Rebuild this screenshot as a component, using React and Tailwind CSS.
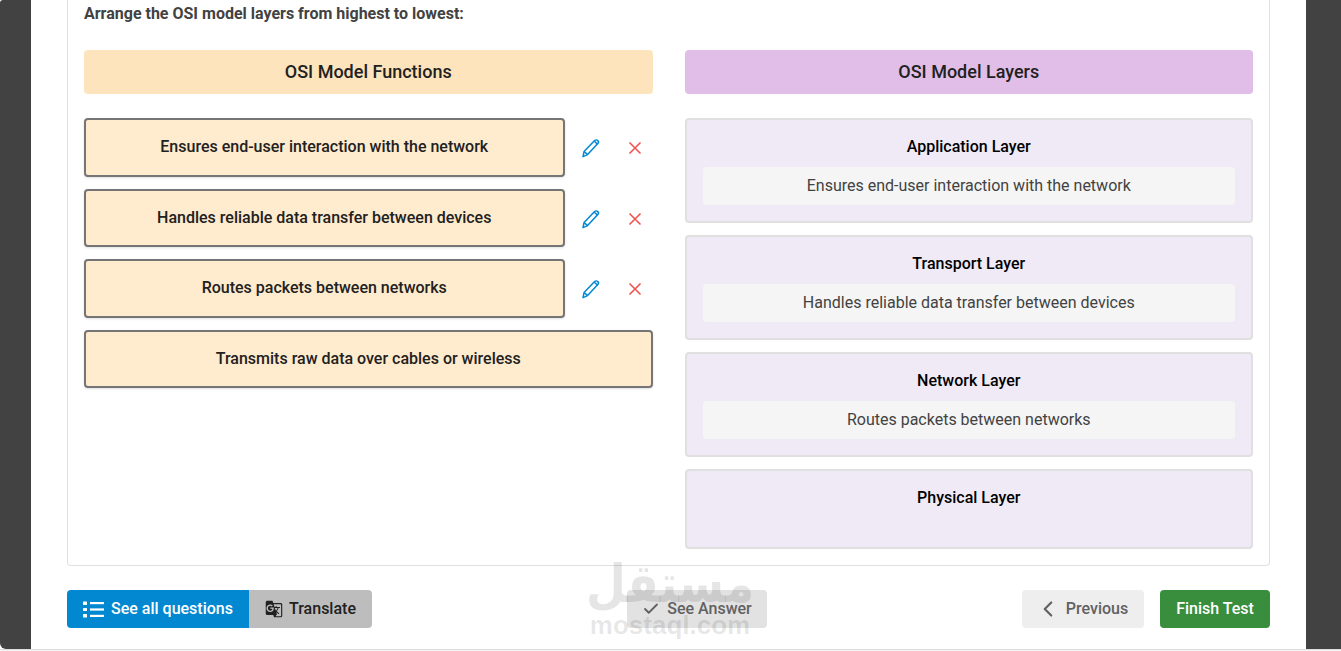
import React from "react";
import { Check, ChevronLeft } from "lucide-react";
import { MdGTranslate } from "react-icons/md";

const functions = [
  { text: "Ensures end-user interaction with the network", placed: true },
  { text: "Handles reliable data transfer between devices", placed: true },
  { text: "Routes packets between networks", placed: true },
  { text: "Transmits raw data over cables or wireless", placed: false },
];

const layers = [
  { name: "Application Layer", answer: "Ensures end-user interaction with the network" },
  { name: "Transport Layer", answer: "Handles reliable data transfer between devices" },
  { name: "Network Layer", answer: "Routes packets between networks" },
  { name: "Physical Layer", answer: "" },
];

const PencilIcon = () => (
  <svg width="20" height="20" viewBox="0 0 20 20" fill="none" stroke="#0288d1" strokeWidth="1.5" strokeLinejoin="round">
    <path d="M2 18.6l1.1-5.1L13.6 2.6c.9-.9 2.3-.9 3.2 0 .9.9.8 2.2 0 3L6.6 16.6z" />
    <path d="M3.1 13.5l3.5 3.1" />
    <path d="M13.4 3.2l3.2 3" />
  </svg>
);

const CloseIcon = () => (
  <svg width="14" height="14" viewBox="0 0 14 14" fill="none" stroke="#ef5350" strokeWidth="1.6">
    <path d="M1.5 1.5l11 11M12.5 1.5l-11 11" />
  </svg>
);

const ListIcon = () => (
  <svg width="21" height="17" viewBox="0 0 21 17" fill="white">
    <rect x="0" y="0.5" width="4" height="3.5" rx="0.6" />
    <rect x="0" y="7" width="4" height="3" rx="0.6" />
    <rect x="0" y="13" width="4" height="3.5" rx="0.6" />
    <rect x="7" y="1" width="14" height="2.2" />
    <rect x="7" y="7.4" width="14" height="2.2" />
    <rect x="7" y="13.8" width="14" height="2.2" />
  </svg>
);

const FunctionRow = ({ item }) => (
  <div className="flex items-center">
    <div className="flex h-[58.5px] flex-1 items-center justify-center rounded border-2 border-[#757575] bg-[#ffebcd] text-[16px] font-medium text-[#212121] shadow-sm">
      {item.text}
    </div>
    {item.placed && (
      <div className="flex w-[88px] items-center pt-[2px] pl-[16px]">
        <PencilIcon />
        <div className="ml-[27px] flex">
          <CloseIcon />
        </div>
      </div>
    )}
  </div>
);

const LayerBox = ({ layer }) => (
  <div className="flex min-h-[80px] flex-col rounded border-2 border-[#e0e0e0] bg-[#f0eaf6] px-4 pt-[15.5px] pb-[16px]">
    <p className="text-center text-[16px] leading-[22px] font-medium text-black">{layer.name}</p>
    {layer.answer && (
      <div className="mt-[9.5px] flex h-[38px] items-center justify-center rounded bg-[#f5f5f5] text-[16px] text-[#424242]">
        {layer.answer}
      </div>
    )}
  </div>
);

export default function App() {
  return (
    <div className="h-[651px] overflow-hidden bg-white font-['Roboto',sans-serif]">
      <div className="h-[649px] overflow-hidden rounded-tl-[3px] rounded-bl-[6px] bg-[#424242] pr-[35px] pl-[31px]">
        <div className="relative flex h-[649px] flex-col bg-white px-[36px]">
          <div className="flex h-[565.5px] flex-col rounded-b border border-t-0 border-[#e0e0e0] px-4">
            <p className="pt-[3px] text-[16px] leading-[22px] font-bold text-[#424242]">
              Arrange the OSI model layers from highest to lowest:
            </p>
            <div className="mt-[25px] grid grid-cols-2 gap-8">
              <div className="flex flex-col">
                <div className="flex h-[44px] items-center justify-center rounded bg-[#fde4bd] pb-[2px] text-[18px] font-medium text-[#212121]">
                  OSI Model Functions
                </div>
                <div className="mt-6 flex flex-col gap-[12px]">
                  {functions.map((item) => (
                    <FunctionRow key={item.text} item={item} />
                  ))}
                </div>
              </div>
              <div className="flex flex-col">
                <div className="flex h-[44px] items-center justify-center rounded bg-[#e1bee7] pb-[2px] text-[18px] font-medium text-[#212121]">
                  OSI Model Layers
                </div>
                <div className="mt-6 flex flex-col gap-[12px]">
                  {layers.map((layer) => (
                    <LayerBox key={layer.name} layer={layer} />
                  ))}
                </div>
              </div>
            </div>
          </div>

          <div className="mt-[24.5px] flex items-center justify-between text-[16px] font-medium">
            <div className="flex">
              <button className="flex h-[38px] w-[182px] items-center justify-center gap-[7px] rounded-l bg-[#0288d1] text-white">
                <ListIcon />
                See all questions
              </button>
              <button className="flex h-[38px] w-[123px] items-center justify-center gap-[6px] rounded-r bg-[#bdbdbd] text-[#212121]">
                <MdGTranslate size={18} />
                Translate
              </button>
            </div>
            <button className="flex h-[38px] w-[140px] items-center justify-center gap-[7px] rounded bg-[#e2e2e2] text-[#616161]">
              <Check size={18} strokeWidth={2.4} />
              See Answer
            </button>
            <div className="flex gap-4">
              <button className="flex h-[38px] w-[122px] items-center justify-center gap-[5px] rounded bg-[#eeeeee] pr-[3px] text-[#616161]">
                <ChevronLeft size={26} strokeWidth={2} />
                Previous
              </button>
              <button className="flex h-[38px] w-[110px] items-center justify-center rounded bg-[#388e3c] text-white">
                Finish Test
              </button>
            </div>
          </div>

          {/* mostaql watermark, sits over the buttons */}
          <div className="pointer-events-none absolute top-[555px] left-[554px] flex w-[170px] flex-col items-center text-[#000000]/10">
            <span className="scale-y-[1.15] font-['DejaVu_Sans',sans-serif] text-[46px] leading-[58px] font-bold">مستقل</span>
            <span className="font-['Liberation_Sans',sans-serif] text-[26px] leading-[24px] font-bold">mostaql.com</span>
          </div>
        </div>
      </div>
      <div className="h-[2px] border-t border-[#dcdcdc] bg-[#f5f5f5]"></div>
    </div>
  );
}
